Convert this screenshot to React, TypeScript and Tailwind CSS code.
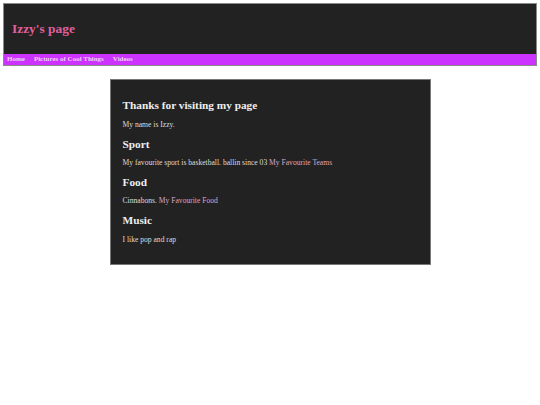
import React from 'react';

const serif = { fontFamily: '"Liberation Serif", "Times New Roman", serif' };

const links = ['Home', 'Pictures of Cool Things', 'Videos'];

export default function App() {
  return (
    <div className="min-h-[405px] bg-white p-[3px]" style={serif}>
      <header className="border border-[#8a8a8a]">
        <div className="flex h-[50px] items-center bg-[#222222] px-[8px]">
          <h1 className="text-[13.4px] font-bold leading-none text-[#e0609f]">Izzy's page</h1>
        </div>
        <nav className="flex h-[11px] items-center bg-[#cc33ff] px-[3px]">
          {links.map((l) => (
            <a key={l} className="px-[4.5px] text-[7px] font-bold leading-none text-[#f3d0f3] first:pl-[0px]">
              {l}
            </a>
          ))}
        </nav>
      </header>

      <main className="mx-auto mt-[13px] w-[321px] border border-[#777777] bg-[#222222] px-[12px] pb-[19px] pt-[18px] text-[#dddddd]">
        <div className="flex flex-col gap-[7px]">
          <h2 className="text-[11.3px] font-bold leading-[14px] text-[#eeeeee]">Thanks for visiting my page</h2>
          <p className="mt-[1px] text-[7.6px] leading-[10px]">My name is Izzy.</p>
          <h2 className="text-[11.3px] font-bold leading-[14px] text-[#eeeeee]">Sport</h2>
          <p className="text-[7.6px] leading-[10px]">
            My favourite sport is basketball. ballin since 03 <a className="text-[#d9a6c6]">My Favourite Teams</a>
          </p>
          <h2 className="text-[11.3px] font-bold leading-[14px] text-[#eeeeee]">Food</h2>
          <p className="text-[7.6px] leading-[10px]">
            Cinnabons. <a className="text-[#d9a6c6]">My Favourite Food</a>
          </p>
          <h2 className="text-[11.3px] font-bold leading-[14px] text-[#eeeeee]">Music</h2>
          <p className="mt-[1px] text-[7.6px] leading-[10px]">I like pop and rap</p>
        </div>
      </main>
    </div>
  );
}
